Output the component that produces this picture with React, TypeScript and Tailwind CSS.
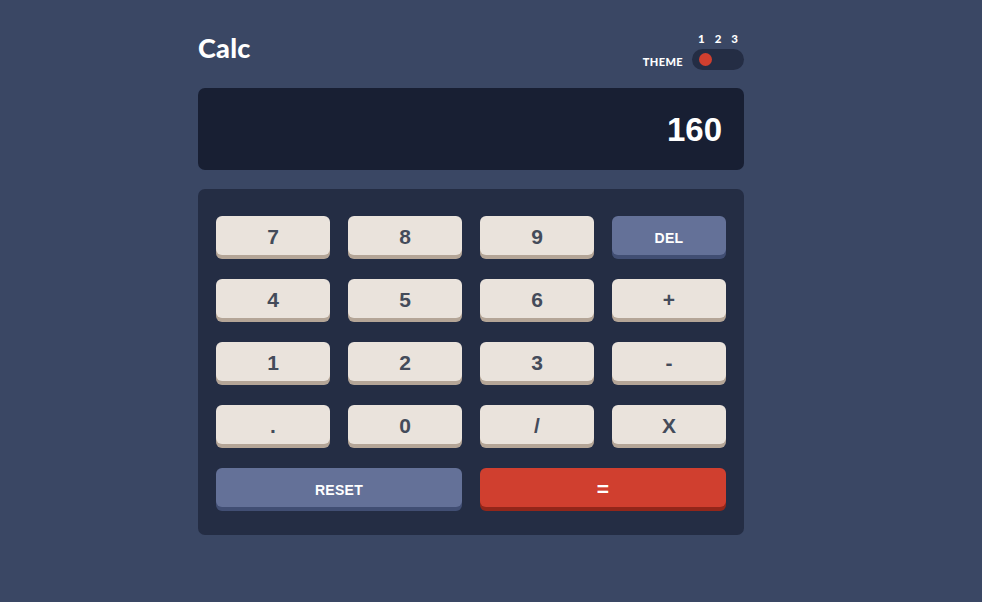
import React from 'react'

type Key = { label: string; kind?: 'num' | 'dark' | 'red'; wide?: boolean; small?: boolean }

const keys: Key[] = [
  { label: '7' }, { label: '8' }, { label: '9' }, { label: 'DEL', kind: 'dark', small: true },
  { label: '4' }, { label: '5' }, { label: '6' }, { label: '+' },
  { label: '1' }, { label: '2' }, { label: '3' }, { label: '-' },
  { label: '.' }, { label: '0' }, { label: '/' }, { label: 'X' },
  { label: 'RESET', kind: 'dark', wide: true, small: true },
  { label: '=', kind: 'red', wide: true },
]

function CalcKey({ k }: { k: Key }) {
  const color =
    k.kind === 'dark'
      ? 'bg-[#647198] text-white shadow-[0_4px_0_#414e73]'
      : k.kind === 'red'
      ? 'bg-[#d03f2f] text-white shadow-[0_4px_0_#93261a]'
      : 'bg-[#eae3dc] text-[#444b5a] shadow-[0_4px_0_#b4a597]'
  return (
    <button
      className={`${color} ${k.wide ? 'col-span-2' : ''} ${
        k.small ? 'text-[14px] pt-[5px] tracking-[0.3px]' : 'text-[21px] pt-[3px]'
      } h-[39px] rounded-[6px] font-bold flex items-center justify-center`}
      style={{ fontFamily: '"Liberation Sans", Arial, sans-serif' }}
    >
      {k.label}
    </button>
  )
}

export default function App() {
  return (
    <div className="min-h-[602px] w-full bg-[#3a4764]">
      <div className="w-[546px] ml-[198px] pt-[32px]">
        {/* header */}
        <div className="flex items-end justify-between h-[38px]">
          <h1
            className="text-white text-[27px] font-black leading-none mb-[9px] tracking-[0.3px]"
            style={{ fontFamily: 'Lato, "Noto Sans", sans-serif' }}
          >
            Calc
          </h1>
          <div
            className="flex items-end gap-[9px] text-white font-black"
            style={{ fontFamily: 'Lato, "Noto Sans", sans-serif' }}
          >
            <span className="text-[11px] leading-none mb-[3px] tracking-[0.4px]">THEME</span>
            <div className="flex flex-col w-[52px]">
              <div className="flex justify-between px-[6px] text-[11.5px] leading-none mb-[5px]">
                <span>1</span>
                <span>2</span>
                <span>3</span>
              </div>
              <div className="h-[21px] rounded-full bg-[#242d44] flex items-center px-[7px]">
                <div className="w-[13px] h-[13px] rounded-full bg-[#d03f2f]" />
              </div>
            </div>
          </div>
        </div>

        {/* display */}
        <div className="mt-[18px] h-[82px] rounded-[7px] bg-[#181f33] flex items-center justify-end pr-[22px]">
          <span
            className="text-white text-[33px] font-bold pt-[2px]"
            style={{ fontFamily: '"Liberation Sans", Arial, sans-serif' }}
          >
            160
          </span>
        </div>

        {/* keypad */}
        <div className="mt-[19px] rounded-[7px] bg-[#242d44] px-[18px] pt-[27px] pb-[28px] grid grid-cols-4 gap-x-[18px] gap-y-[24px]">
          {keys.map((k) => (
            <CalcKey key={k.label} k={k} />
          ))}
        </div>
      </div>
    </div>
  )
}
